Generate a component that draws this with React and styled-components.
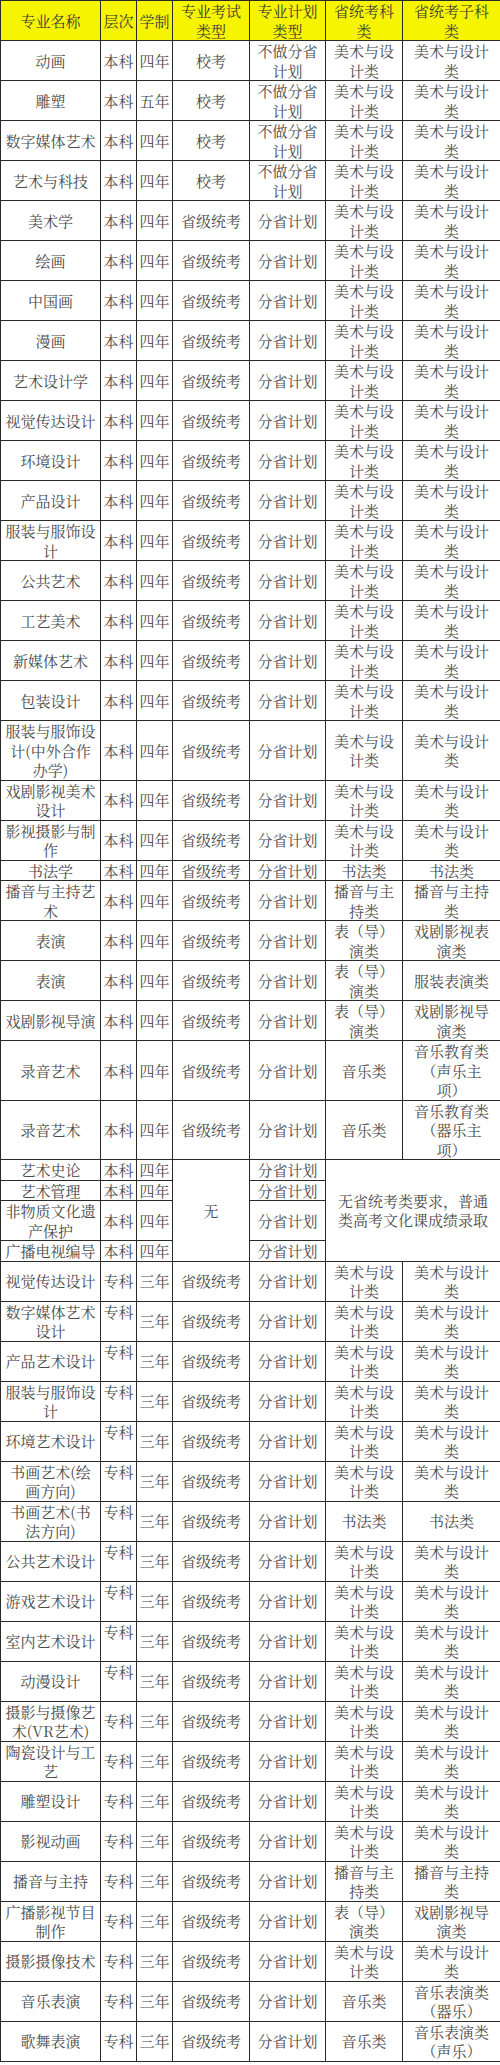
import React from "react";
import styled, { createGlobalStyle } from "styled-components";

const GlobalStyle = createGlobalStyle`
  html, body {
    margin: 0;
    padding: 0;
    background: #ffffff;
  }
`;

const Table = styled.table`
  width: 500px;
  table-layout: fixed;
  border-collapse: collapse;
  font-family: "Noto Serif CJK SC", "Noto Sans CJK SC", "Liberation Serif", serif;
  font-size: 15px;
  line-height: 19.5px;
  color: #4a4a4a;
`;

const HeadCell = styled.th`
  background: #f7f400;
  color: #3a3a3a;
  font-weight: normal;
  border: 1px solid #2a2a2a;
  padding: 0;
  text-align: center;
  vertical-align: middle;
  white-space: pre;
`;

const Cell = styled.td`
  border: 1px solid #2a2a2a;
  padding: 0;
  text-align: center;
  vertical-align: ${(p) => (p.$top ? "top" : "middle")};
  white-space: pre;
  overflow: hidden;
`;

const widths = [100, 36, 36, 77, 76, 77, 98];

const headers = ["专业名称", "层次", "学制", "专业考试\n类型", "专业计划\n类型", "省统考科\n类", "省统考子科\n类"];

const ART = ["美术与设\n计类", "美术与设计\n类"];
const SCHOOL = ["校考", "不做分省\n计划"];
const PROV = ["省级统考", "分省计划"];

const benke = [
  ["动画", "四年", SCHOOL, ART],
  ["雕塑", "五年", SCHOOL, ART],
  ["数字媒体艺术", "四年", SCHOOL, ART],
  ["艺术与科技", "四年", SCHOOL, ART],
  ["美术学", "四年", PROV, ART],
  ["绘画", "四年", PROV, ART],
  ["中国画", "四年", PROV, ART],
  ["漫画", "四年", PROV, ART],
  ["艺术设计学", "四年", PROV, ART],
  ["视觉传达设计", "四年", PROV, ART],
  ["环境设计", "四年", PROV, ART],
  ["产品设计", "四年", PROV, ART],
  ["服装与服饰设\n计", "四年", PROV, ART],
  ["公共艺术", "四年", PROV, ART],
  ["工艺美术", "四年", PROV, ART],
  ["新媒体艺术", "四年", PROV, ART],
  ["包装设计", "四年", PROV, ART],
  ["服装与服饰设\n计(中外合作\n办学)", "四年", PROV, ART],
  ["戏剧影视美术\n设计", "四年", PROV, ART],
  ["影视摄影与制\n作", "四年", PROV, ART],
  ["书法学", "四年", PROV, ["书法类", "书法类"]],
  ["播音与主持艺\n术", "四年", PROV, ["播音与主\n持类", "播音与主持\n类"]],
  ["表演", "四年", PROV, ["表（导）\n演类", "戏剧影视表\n演类"]],
  ["表演", "四年", PROV, ["表（导）\n演类", "服装表演类"]],
  ["戏剧影视导演", "四年", PROV, ["表（导）\n演类", "戏剧影视导\n演类"]],
  ["录音艺术", "四年", PROV, ["音乐类", "音乐教育类\n（声乐主\n项）"]],
  ["录音艺术", "四年", PROV, ["音乐类", "音乐教育类\n（器乐主\n项）"]],
];

const noExam = ["艺术史论", "艺术管理", "非物质文化遗\n产保护", "广播电视编导"];

const zhuanke = [
  ["视觉传达设计", false, ART],
  ["数字媒体艺术\n设计", true, ART],
  ["产品艺术设计", true, ART],
  ["服装与服饰设\n计", true, ART],
  ["环境艺术设计", true, ART],
  ["书画艺术(绘\n画方向)", true, ART],
  ["书画艺术(书\n法方向)", true, ["书法类", "书法类"]],
  ["公共艺术设计", true, ART],
  ["游戏艺术设计", true, ART],
  ["室内艺术设计", true, ART],
  ["动漫设计", true, ART],
  ["摄影与摄像艺\n术(VR艺术)", false, ART],
  ["陶瓷设计与工\n艺", false, ART],
  ["雕塑设计", false, ART],
  ["影视动画", false, ART],
  ["播音与主持", false, ["播音与主\n持类", "播音与主持\n类"]],
  ["广播影视节目\n制作", false, ["表（导）\n演类", "戏剧影视导\n演类"]],
  ["摄影摄像技术", false, ART],
  ["音乐表演", false, ["音乐类", "音乐表演类\n（器乐）"]],
  ["歌舞表演", false, ["音乐类", "音乐表演类\n（声乐）"]],
];

const App = () => {
  return (
    <>
      <GlobalStyle />
      <Table>
        <colgroup>
          {widths.map((w, i) => (
            <col key={i} style={{ width: w }} />
          ))}
        </colgroup>
        <thead>
          <tr>
            {headers.map((h) => (
              <HeadCell key={h}>{h}</HeadCell>
            ))}
          </tr>
        </thead>
        <tbody>
          {benke.map(([name, years, [exam, plan], [cat, sub]], i) => (
            <tr key={"b" + i}>
              <Cell>{name}</Cell>
              <Cell>本科</Cell>
              <Cell>{years}</Cell>
              <Cell>{exam}</Cell>
              <Cell>{plan}</Cell>
              <Cell>{cat}</Cell>
              <Cell>{sub}</Cell>
            </tr>
          ))}
          {noExam.map((name, i) => (
            <tr key={"n" + i}>
              <Cell>{name}</Cell>
              <Cell>本科</Cell>
              <Cell>四年</Cell>
              {i === 0 && <Cell rowSpan={4}>无</Cell>}
              <Cell>分省计划</Cell>
              {i === 0 && (
                <Cell rowSpan={4} colSpan={2}>
                  {"无省统考类要求，普通\n类高考文化课成绩录取"}
                </Cell>
              )}
            </tr>
          ))}
          {zhuanke.map(([name, top, [cat, sub]], i) => (
            <tr key={"z" + i}>
              <Cell>{name}</Cell>
              <Cell $top={top}>专科</Cell>
              <Cell>三年</Cell>
              <Cell>省级统考</Cell>
              <Cell>分省计划</Cell>
              <Cell>{cat}</Cell>
              <Cell>{sub}</Cell>
            </tr>
          ))}
        </tbody>
      </Table>
    </>
  );
};

export default App;
